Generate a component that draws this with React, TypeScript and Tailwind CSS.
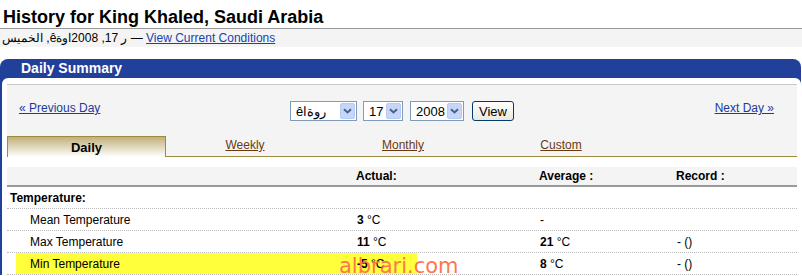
import React from 'react'

function Chevron() {
  return (
    <svg width="9" height="6" viewBox="0 0 9 6" className="block">
      <path d="M1 1.2 L4.5 4.5 L8 1.2" fill="none" stroke="#4d6185" strokeWidth="2" />
    </svg>
  )
}

function FakeSelect({ width, children }: { width: string; children: React.ReactNode }) {
  return (
    <div className={`${width} h-[20px] border border-[#7f9db9] bg-white flex items-stretch`}>
      <div className="flex-1 flex items-center pl-[5px] text-[13px] leading-none whitespace-nowrap overflow-hidden">
        {children}
      </div>
      <div className="w-[15px] my-[1px] mr-[1px] rounded-[2px] border border-[#b9cbf3] bg-[#c6d6f9] flex items-center justify-center">
        <Chevron />
      </div>
    </div>
  )
}

const rows = [
  { label: 'Mean Temperature', actual: '3', avg: null, record: '' },
  { label: 'Max Temperature', actual: '11', avg: '21', record: '- ()' },
  { label: 'Min Temperature', actual: '-5', avg: '8', record: '- ()', mark: true },
]

export default function App() {
  return (
    <div className="relative w-[802px] h-[276px] overflow-hidden bg-white text-black font-['Liberation_Sans',Arial,sans-serif]">
      {/* Title */}
      <h1 className="h-[29px] pl-[3px] pt-[6px] text-[18px] leading-[22px] font-bold border-b border-[#999]">
        History for King Khaled, Saudi Arabia
      </h1>
      <div className="h-[18px] bg-[#f4f4f4] pl-[2px] text-[12px] leading-[18px] whitespace-nowrap flex">
        <span>الخميس</span>
        <span>&nbsp;,</span>
        <span>ê</span>
        <span>اوة</span>
        <span>2008&nbsp;,17&nbsp;</span>
        <span>ر</span>
        <span>&nbsp;—&nbsp;</span>
        <a href="#" className="underline text-[#2040b0]">View Current Conditions</a>
      </div>

      {/* Panel */}
      <div className="mt-[12px] w-[801px] bg-[#21409a] rounded-t-[8px] pl-[2px]">
        <div className="h-[19px] pl-[19px] text-[14px] leading-[19px] font-bold text-white">Daily Summary</div>
        <div className="bg-white rounded-t-[6px] pt-[6px] pl-[5px] pr-[4px]">
          <div className="border-t border-[#c8c8c8] bg-[#f4f4f4] pt-[16px]">
            <div className="grid grid-cols-[1fr_auto_1fr] items-start h-[20px]">
              <a href="#" className="pl-[12px] text-[12px] leading-[14px] underline text-[#1a3a9c]">« Previous Day</a>
              <div className="flex items-center">
                <FakeSelect width="w-[67px]">
                  <span>ê</span>
                  <span>ا</span>
                  <span>وة</span>
                  <span>ر</span>
                </FakeSelect>
                <div className="ml-[6px]">
                  <FakeSelect width="w-[40px]">17</FakeSelect>
                </div>
                <div className="ml-[7px]">
                  <FakeSelect width="w-[54px]">2008</FakeSelect>
                </div>
                <button className="ml-[8px] w-[42px] h-[20px] rounded-[3px] border border-[#003c74] bg-gradient-to-b from-white to-[#ece9d8] text-[13px] leading-none">
                  View
                </button>
              </div>
              <div className="flex justify-end pr-[23px]">
                <a href="#" className="text-[12px] leading-[14px] underline text-[#1a3a9c]">Next Day »</a>
              </div>
            </div>

            {/* Tabs */}
            <div className="mt-[15px] flex h-[21px] text-[12px]">
              <div className="w-[159px] border border-b-0 border-[#9f8b3e] bg-gradient-to-b from-[#c2b07a] to-white text-center text-[13px] font-bold leading-[21px]">
                Daily
              </div>
              {['Weekly', 'Monthly', 'Custom'].map((t) => (
                <div key={t} className="w-[158px] border-b border-[#9f8b3e] text-center leading-[19px]">
                  <a href="#" className="underline text-[#6b3a10]">{t}</a>
                </div>
              ))}
              <div className="flex-1 border-b border-[#9f8b3e]" />
            </div>
          </div>

          {/* Table */}
          <div className="mt-[10px] text-[12px]">
            <div className="grid grid-cols-[349px_183px_137px_1fr] h-[20px] bg-[#f4f4f4] border-b-2 border-[#999] font-bold leading-[18px]">
              <div />
              <div>Actual:</div>
              <div>Average :</div>
              <div>Record :</div>
            </div>
            <div className="h-[22px] border-b border-dotted border-[#bbb] pl-[3px] font-bold leading-[22px]">
              Temperature:
            </div>
            {rows.map((r) => (
              <div
                key={r.label}
                className="relative grid grid-cols-[349px_183px_137px_1fr] h-[22px] border-b border-dotted border-[#bbb] leading-[22px]"
              >
                {r.mark && <div className="absolute left-[9px] top-0 w-[401px] h-[21px] bg-[#ffff3c]" />}
                <div className="relative pl-[23px]">{r.label}</div>
                <div className="relative pl-[1px]">
                  <b>{r.actual}</b>&nbsp;°C
                </div>
                <div className="relative pl-[1px]">
                  {r.avg ? (
                    <>
                      <b>{r.avg}</b>&nbsp;°C
                    </>
                  ) : (
                    '-'
                  )}
                </div>
                <div className="relative pl-[1px]">{r.record}</div>
              </div>
            ))}
          </div>
        </div>
      </div>

      {/* watermark */}
      <div className="absolute left-[339px] top-[254px] text-[21px] leading-[24px] text-[#ff774f] font-['DejaVu_Sans',sans-serif]">
        albrari.com
      </div>
    </div>
  )
}
